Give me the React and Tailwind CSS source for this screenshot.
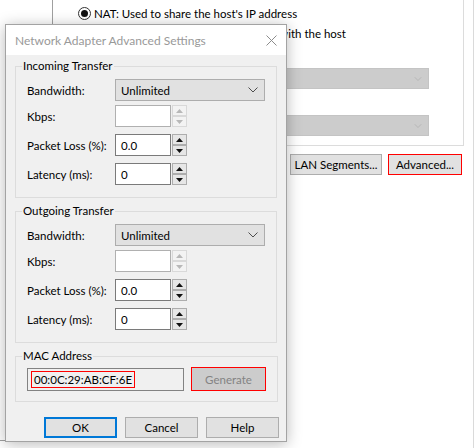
import { ChevronDown } from 'lucide-react'

// Windows-style classic dialog over the VM network settings page.

function Arrow({ up, disabled }) {
  return (
    <svg width="7" height="4" viewBox="0 0 7 4" className="block">
      <polygon
        points={up ? '0,4 3.5,0 7,4' : '0,0 3.5,4 7,0'}
        fill={disabled ? '#b8b8b8' : '#111111'}
      />
    </svg>
  )
}

function Spinner({ disabled }) {
  const cell = disabled
    ? 'flex-1 flex items-center justify-center border border-[#d9d9d9] bg-[#f3f3f3]'
    : 'flex-1 flex items-center justify-center border border-[#adadad] bg-[#e6e6e6]'
  return (
    <div className="w-[15px] h-[22px] flex flex-col ml-[1px]">
      <div className={cell}><Arrow up disabled={disabled} /></div>
      <div className={cell}><Arrow disabled={disabled} /></div>
    </div>
  )
}

function Select({ value }) {
  return (
    <div className="w-[150px] h-[22px] flex items-center justify-between border border-[#adadad] bg-[#e1e1e1] pl-[5px] pr-[6px]">
      <span className="text-black">{value}</span>
      <svg width="10" height="6" viewBox="0 0 10 6" className="block">
        <polyline points="0.5,0.5 5,5 9.5,0.5" fill="none" stroke="#4d4d4d" strokeWidth="1" />
      </svg>
    </div>
  )
}

function NumberRow({ label, value, disabled, className }) {
  return (
    <div className={'flex items-center ' + className}>
      <span className="w-[88px] whitespace-nowrap">{label}</span>
      <div
        className={
          disabled
            ? 'w-[56px] h-[22px] border border-[#b0b0b0] bg-white'
            : 'w-[56px] h-[22px] border border-[#7a7a7a] bg-white flex items-center pl-[5px]'
        }
      >
        {value}
      </div>
      <Spinner disabled={disabled} />
    </div>
  )
}

function Group({ title, children, className }) {
  return (
    <fieldset className={'border border-[#dcdcdc] mx-[9px] px-[11px] ' + className}>
      <legend className="-ml-[5px] px-[1px] leading-[14px]">{title}</legend>
      {children}
    </fieldset>
  )
}

function TransferGroup({ title, className }) {
  return (
    <Group title={title} className={'pt-[6px] pb-[12px] ' + className}>
      <div className="flex items-center">
        <span className="w-[88px]">Bandwidth:</span>
        <Select value="Unlimited" />
      </div>
      <NumberRow label="Kbps:" disabled className="mt-[4px]" />
      <NumberRow label="Packet Loss (%):" value="0.0" className="mt-[7px]" />
      <NumberRow label="Latency (ms):" value="0" className="mt-[7px]" />
    </Group>
  )
}

export default function App() {
  return (
    <div className="relative w-[474px] h-[448px] bg-white overflow-hidden flex text-[11.5px] leading-[15px] text-black font-['Lato','Liberation_Sans',sans-serif]">
      {/* left list of the settings page */}
      <div className="w-[53px] h-[441px] border-r border-b border-[#a0a0a0] shrink-0" />

      {/* right panel of the settings page */}
      <div className="flex-1 h-full border-r border-[#dadada]">
        <div className="h-[146px] mr-[9px] border-r border-b border-[#dcdcdc] pl-[25px] pt-[6px]">
          <div className="flex items-center gap-[3px] h-[14px]">
            <span className="w-[13px] h-[13px] rounded-full border border-[#333] flex items-center justify-center">
              <span className="w-[7px] h-[7px] rounded-full bg-[#111]" />
            </span>
            <span className="whitespace-nowrap">NAT: Used to share the host's IP address</span>
          </div>
          <div className="flex items-center gap-[3px] h-[14px] mt-[6px]">
            <span className="w-[13px] h-[13px] rounded-full border border-[#333]" />
            <span className="whitespace-nowrap">Host-only: A private network shared with the host</span>
          </div>
          <div className="mt-[28px] mr-[34px] h-[21px] bg-[#cccccc] border border-[#c4c4c4] flex items-center justify-end pr-[4px]">
            <ChevronDown size={12} strokeWidth={1.2} color="#a8a8a8" />
          </div>
          <div className="mt-[26px] mr-[34px] h-[21px] bg-[#cccccc] border border-[#c4c4c4] flex items-center justify-end pr-[4px]">
            <ChevronDown size={12} strokeWidth={1.2} color="#a8a8a8" />
          </div>
        </div>
        <div className="flex justify-end gap-[6px] mr-[11px] mt-[8px]">
          <button className="w-[92px] h-[21px] border border-[#adadad] bg-[#e1e1e1] whitespace-nowrap">LAN Segments...</button>
          <button className="w-[74px] h-[21px] border border-[#ff0000] bg-[#e1e1e1] whitespace-nowrap">Advanced...</button>
        </div>
      </div>

      {/* the advanced settings dialog */}
      <div className="absolute left-[5px] top-[24px] w-[282px] h-[418px] border border-[#a3a3a3] bg-[#f0f0f0] flex flex-col shadow-[0_2px_14px_rgba(0,0,0,0.28)]">
        <div className="h-[30px] bg-white flex items-center justify-between pl-[9px] pr-[9px] shrink-0">
          <span className="text-[12px] text-[#999999] whitespace-nowrap">Network Adapter Advanced Settings</span>
          <svg width="11" height="11" viewBox="0 0 11 11" className="block">
            <path d="M0.5 0.5 L10.5 10.5 M10.5 0.5 L0.5 10.5" stroke="#8c8c8c" strokeWidth="1" />
          </svg>
        </div>

        <div className="pt-[4px]">
          <TransferGroup title="Incoming Transfer" />
          <TransferGroup title="Outgoing Transfer" className="mt-[6px]" />

          <Group title="MAC Address" className="mt-[6px] pt-[4px] pb-[10px]">
            <div className="flex items-center gap-[7px]">
              <div className="w-[157px] h-[23px] border border-[#828282] bg-[#f0f0f0] flex items-center pl-[3px]">
                <span className="border border-[#ff0000] h-[17px] flex items-center px-[2px] whitespace-nowrap">00:0C:29:AB:CF:6E</span>
              </div>
              <button className="w-[75px] h-[24px] border border-[#ff0000] bg-[#cccccc] text-[#838383]">Generate</button>
            </div>
          </Group>

          <div className="flex justify-end gap-[8px] pr-[7px] mt-[15px]">
            <button className="w-[73px] h-[21px] border-2 border-[#0078d7] bg-[#e1e1e1]">OK</button>
            <button className="w-[73px] h-[21px] border border-[#adadad] bg-[#e1e1e1]">Cancel</button>
            <button className="w-[73px] h-[21px] border border-[#adadad] bg-[#e1e1e1]">Help</button>
          </div>
        </div>
      </div>
    </div>
  )
}
